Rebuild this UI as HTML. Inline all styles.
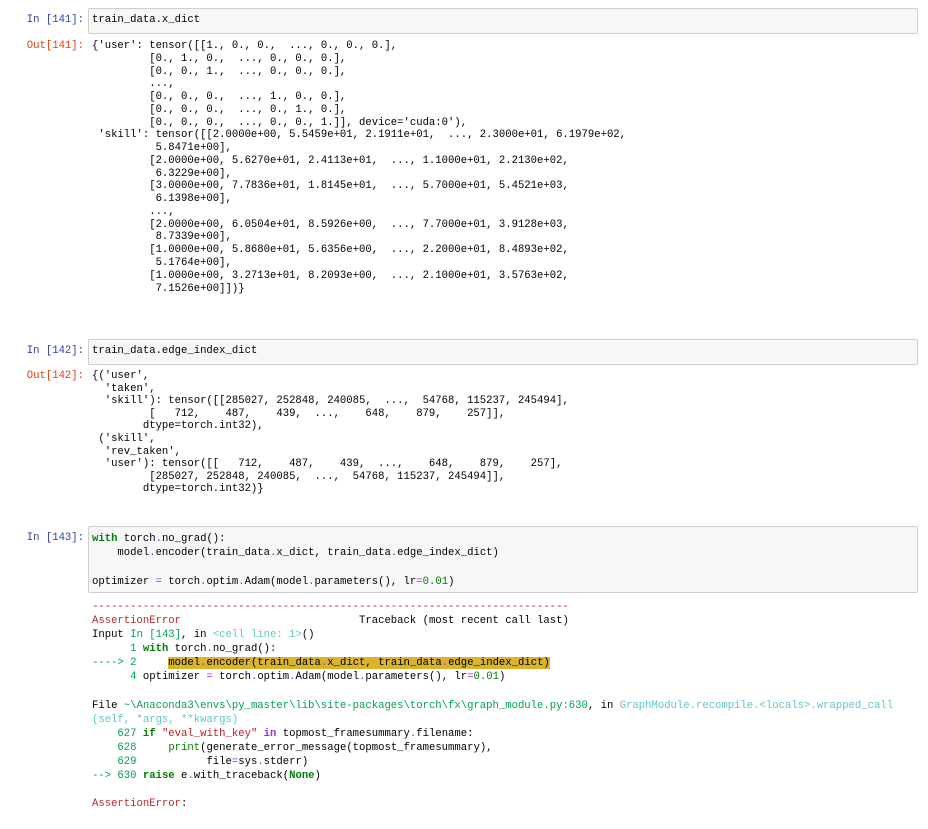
<!DOCTYPE html><html><head><style>
body{margin:0;background:#fff;width:928px;height:829px;position:relative;overflow:hidden;font-family:"Liberation Mono","DejaVu Sans Mono",monospace;font-size:10.6px;color:#000}
pre{margin:0;font:inherit;position:absolute;white-space:pre}
.p{position:absolute;left:0;width:84px;text-align:right}
.in{color:#303F9F}.out{color:#D84315}
.box{position:absolute;left:88px;width:828px;background:#f7f7f7;border:1px solid #cfcfcf;border-radius:2px}
.k{color:#008000;font-weight:bold}.o{color:#AA22FF}.n{color:#008000}
.r{color:#B22B31}.g{color:#00A250}.c{color:#60C6C8}.hl{background:#DAB42C}
.kp{color:#AA22FF;font-weight:bold}.s{color:#BA2121}
</style></head><body>
<div class="p in" style="top:14px">In [141]:</div>
<div class="box" style="top:8px;height:24px"></div>
<pre style="left:92px;top:14px">train_data.x_dict</pre>
<div class="p out" style="top:40px">Out[141]:</div>
<pre style="left:92px;top:40px;line-height:12.76px">{'user': tensor([[1., 0., 0.,  ..., 0., 0., 0.],
         [0., 1., 0.,  ..., 0., 0., 0.],
         [0., 0., 1.,  ..., 0., 0., 0.],
         ...,
         [0., 0., 0.,  ..., 1., 0., 0.],
         [0., 0., 0.,  ..., 0., 1., 0.],
         [0., 0., 0.,  ..., 0., 0., 1.]], device='cuda:0'),
 'skill': tensor([[2.0000e+00, 5.5459e+01, 2.1911e+01,  ..., 2.3000e+01, 6.1979e+02,
          5.8471e+00],
         [2.0000e+00, 5.6270e+01, 2.4113e+01,  ..., 1.1000e+01, 2.2130e+02,
          6.3229e+00],
         [3.0000e+00, 7.7836e+01, 1.8145e+01,  ..., 5.7000e+01, 5.4521e+03,
          6.1398e+00],
         ...,
         [2.0000e+00, 6.0504e+01, 8.5926e+00,  ..., 7.7000e+01, 3.9128e+03,
          8.7339e+00],
         [1.0000e+00, 5.8680e+01, 5.6356e+00,  ..., 2.2000e+01, 8.4893e+02,
          5.1764e+00],
         [1.0000e+00, 3.2713e+01, 8.2093e+00,  ..., 2.1000e+01, 3.5763e+02,
          7.1526e+00]])}</pre>
<div class="p in" style="top:345px">In [142]:</div>
<div class="box" style="top:339px;height:24px"></div>
<pre style="left:92px;top:345px">train_data.edge_index_dict</pre>
<div class="p out" style="top:370px">Out[142]:</div>
<pre style="left:92px;top:370px;line-height:12.6px">{('user',
  'taken',
  'skill'): tensor([[285027, 252848, 240085,  ...,  54768, 115237, 245494],
         [   712,    487,    439,  ...,    648,    879,    257]],
        dtype=torch.int32),
 ('skill',
  'rev_taken',
  'user'): tensor([[   712,    487,    439,  ...,    648,    879,    257],
         [285027, 252848, 240085,  ...,  54768, 115237, 245494]],
        dtype=torch.int32)}</pre>
<div class="p in" style="top:532px">In [143]:</div>
<div class="box" style="top:526px;height:65px"></div>
<pre style="left:92px;top:532px;line-height:14.3px"><span class="k">with</span> torch<span class="o">.</span>no_grad():
    model<span class="o">.</span>encoder(train_data<span class="o">.</span>x_dict, train_data<span class="o">.</span>edge_index_dict)

optimizer <span class="o">=</span> torch<span class="o">.</span>optim<span class="o">.</span>Adam(model<span class="o">.</span>parameters(), lr<span class="o">=</span><span class="n">0.01</span>)</pre>
<pre style="left:92px;top:600px;line-height:14.1px"><span class="r">---------------------------------------------------------------------------</span>
<span class="r">AssertionError</span>                            Traceback (most recent call last)
Input <span class="g">In [143]</span>, in <span class="c">&lt;cell line: 1&gt;</span>()
<span class="g">      1</span> <span class="k">with</span> torch<span class="o">.</span>no_grad():
<span class="g">----&gt; 2</span>     <span class="hl">model<span class="o">.</span>encoder(train_data<span class="o">.</span>x_dict, train_data<span class="o">.</span>edge_index_dict)</span>
<span class="g">      4</span> optimizer <span class="o">=</span> torch<span class="o">.</span>optim<span class="o">.</span>Adam(model<span class="o">.</span>parameters(), lr<span class="o">=</span><span class="n">0.01</span>)

File <span class="g">~\Anaconda3\envs\py_master\lib\site-packages\torch\fx\graph_module.py:630</span>, in <span class="c">GraphModule.recompile.&lt;locals&gt;.wrapped_call</span>
<span class="c">(self, *args, **kwargs)</span>
<span class="g">    627</span> <span class="k">if</span> <span class="s">"eval_with_key"</span> <span class="kp">in</span> topmost_framesummary<span class="o">.</span>filename:
<span class="g">    628</span>     <span class="n">print</span>(generate_error_message(topmost_framesummary),
<span class="g">    629</span>           file<span class="o">=</span>sys<span class="o">.</span>stderr)
<span class="g">--&gt; 630</span> <span class="k">raise</span> e<span class="o">.</span>with_traceback(<span class="k">None</span>)

<span class="r">AssertionError</span>: </pre>
</body></html>
